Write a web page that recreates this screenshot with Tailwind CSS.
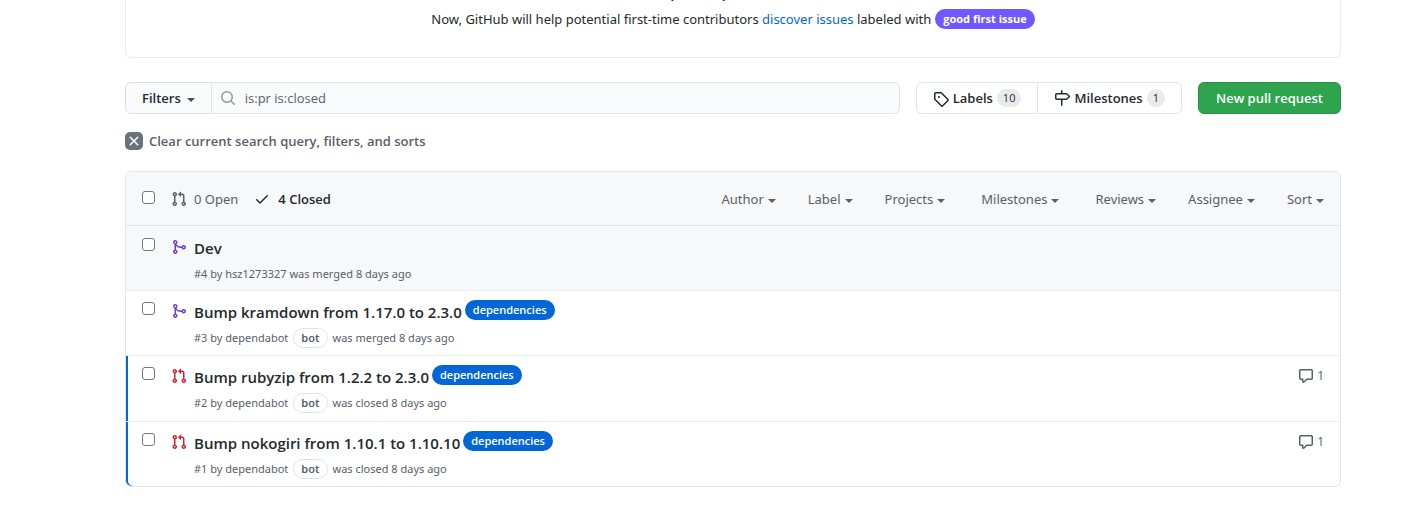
<!DOCTYPE html>
<html lang="en">
<head>
<meta charset="utf-8">
<meta name="viewport" content="width=device-width, initial-scale=1">
<title>Pull requests</title>
<script src="https://cdn.jsdelivr.net/npm/@tailwindcss/browser@4"></script>
</head>
<body class="overflow-x-hidden bg-white font-['Open_Sans','Noto_Sans',sans-serif] text-[13px] leading-5 text-[#24292e]">
<svg class="hidden" aria-hidden="true">
  <symbol id="pr" viewBox="0 0 16 16"><path fill-rule="evenodd" d="M7.177 3.073L9.573.677A.25.25 0 0110 .854v4.792a.25.25 0 01-.427.177L7.177 3.427a.25.25 0 010-.354zM3.75 2.5a.75.75 0 100 1.5.75.75 0 000-1.5zm-2.25.75a2.25 2.25 0 113 2.122v5.256a2.251 2.251 0 11-1.5 0V5.372A2.25 2.25 0 011.5 3.25zM11 2.5h-1V4h1a1 1 0 011 1v5.628a2.251 2.251 0 101.5 0V5A2.5 2.5 0 0011 2.5zm1 10.25a.75.75 0 111.5 0 .75.75 0 01-1.5 0zM3.75 12a.75.75 0 100 1.5.75.75 0 000-1.5z"/></symbol>
  <symbol id="merge" viewBox="0 0 16 16"><path fill-rule="evenodd" d="M5 3.254V3.25v.005a.75.75 0 110-.005v.004zm.45 1.9a2.25 2.25 0 10-1.95.218v5.256a2.25 2.25 0 101.5 0V7.123A5.735 5.735 0 009.25 9h1.378a2.251 2.251 0 100-1.5H9.25a4.25 4.25 0 01-3.8-2.346zM12.75 9a.75.75 0 100-1.5.75.75 0 000 1.5zm-8.5 4.5a.75.75 0 100-1.5.75.75 0 000 1.5z"/></symbol>
  <symbol id="comment" viewBox="0 0 16 16"><path fill-rule="evenodd" d="M2.75 2.5a.25.25 0 00-.25.25v7.5c0 .138.112.25.25.25h2a.75.75 0 01.75.75v2.19l2.72-2.72a.75.75 0 01.53-.22h4.5a.25.25 0 00.25-.25v-7.5a.25.25 0 00-.25-.25H2.75zM1 2.75C1 1.784 1.784 1 2.75 1h10.5c.966 0 1.75.784 1.75 1.75v7.5A1.75 1.75 0 0113.25 12H9.06l-2.573 2.573A1.457 1.457 0 014 13.543V12H2.75A1.75 1.75 0 011 10.25v-7.5z"/></symbol>
</svg>
<main class="pr-[65px] pl-[125px]">
  <section class="-mt-5 rounded-md border border-t-0 border-[#eaecef] pb-7 text-center">
    <h2 class="text-[15px] leading-6 font-semibold">Label issues and pull requests for new contributors</h2>
    <p class="flex items-center justify-center gap-1 pt-[5px]">
      <span class="font-['Noto_Sans',sans-serif]">Now, GitHub will help potential first-time contributors <a href="#" class="text-[#0366d6]">discover issues</a> labeled with</span>
      <a href="#" class="rounded-full bg-[#7057ff] px-2 text-[11px] leading-5 font-bold text-white">good first issue</a>
    </p>
  </section>

  <div class="mt-6 flex h-8">
    <button type="button" class="flex items-center gap-[6px] rounded-l-md border border-[#dddfe1] bg-[#fafbfc] px-4 font-semibold">Filters
      <span class="mt-1 border-x-4 border-t-4 border-x-transparent border-t-[#4a4f54]"></span></button>
    <label class="-ml-px flex flex-1 items-center gap-[9px] rounded-r-md border border-[#e1e4e8] bg-[#fafbfc] pl-2 text-[#586069]">
      <svg class="size-4 fill-[#959da5]" viewBox="0 0 16 16"><path fill-rule="evenodd" d="M11.5 7a4.499 4.499 0 11-8.998 0A4.499 4.499 0 0111.5 7zm-.82 4.74a6 6 0 111.06-1.06l3.04 3.04a.75.75 0 11-1.06 1.06l-3.04-3.04z"/></svg>
      <input type="text" aria-label="Search all issues" value="is:pr is:closed" class="min-w-0 flex-1 bg-transparent outline-none">
    </label>
    <nav class="ml-4 flex font-semibold">
      <a href="#" class="flex items-center gap-1 rounded-l-md border border-[#e1e4e8] px-4">
        <svg class="mt-px size-4 fill-current" viewBox="0 0 16 16"><path fill-rule="evenodd" d="M2.5 7.775V2.75a.25.25 0 01.25-.25h5.025a.25.25 0 01.177.073l6.25 6.25a.25.25 0 010 .354l-5.025 5.025a.25.25 0 01-.354 0l-6.25-6.25a.25.25 0 01-.073-.177zm-1.5 0V2.75C1 1.784 1.784 1 2.75 1h5.025c.464 0 .91.184 1.238.513l6.25 6.25a1.75 1.75 0 010 2.474l-5.026 5.026a1.75 1.75 0 01-2.474 0l-6.25-6.25A1.75 1.75 0 011 7.775zM6 5a1 1 0 100 2 1 1 0 000-2z"/></svg>
        Labels <span class="rounded-full bg-[#e8eaec] px-[6px] text-[11px] leading-[18px] font-medium">10</span></a>
      <a href="#" class="-ml-px flex items-center gap-1 rounded-r-md border border-[#e1e4e8] px-4">
        <svg class="size-4 fill-current" viewBox="0 0 16 16"><path fill-rule="evenodd" d="M7.75 0a.75.75 0 01.75.75V3h3.634c.414 0 .814.147 1.13.414l2.07 1.75a1.75 1.75 0 010 2.672l-2.07 1.75a1.75 1.75 0 01-1.13.414H8.5v5.25a.75.75 0 11-1.5 0V10H2.75A1.75 1.75 0 011 8.25v-3.5C1 3.784 1.784 3 2.75 3H7V.75A.75.75 0 017.75 0zm0 8.5h4.384a.25.25 0 00.161-.06l2.07-1.75a.25.25 0 000-.38l-2.07-1.75a.25.25 0 00-.161-.06H2.75a.25.25 0 00-.25.25v3.5c0 .138.112.25.25.25h5z"/></svg>
        Milestones <span class="rounded-full bg-[#e8eaec] px-[6px] text-[11px] leading-[18px] font-medium">1</span></a>
    </nav>
    <a href="#" class="ml-4 flex items-center rounded-md border border-[#2a9147] bg-[#2ea44f] px-[17px] font-semibold text-white">New pull request</a>
  </div>

  <a href="#" class="mt-[17px] flex w-fit items-center gap-[6px] font-semibold text-[#586069]">
    <span class="flex size-[18px] items-center justify-center rounded-[5px] bg-[#6a737d]"><svg class="size-4 fill-white" viewBox="0 0 16 16"><path fill-rule="evenodd" d="M3.72 3.72a.75.75 0 011.06 0L8 6.94l3.22-3.22a.75.75 0 111.06 1.06L9.06 8l3.22 3.22a.75.75 0 11-1.06 1.06L8 9.06l-3.22 3.22a.75.75 0 01-1.06-1.06L6.94 8 3.72 4.78a.75.75 0 010-1.06z"/></svg></span>
    Clear current search query, filters, and sorts</a>

  <section class="mt-5 overflow-hidden rounded-md border border-[#e1e4e8]">
    <header class="flex h-[53px] items-center bg-[#f6f8fa] px-4 text-[#586069]">
      <input type="checkbox" aria-label="Select all" class="mb-[2px] size-[13px] appearance-none rounded-[3px] border border-[#767676] bg-white">
      <a href="#" class="ml-4 flex items-center gap-[7px] font-['Noto_Sans',sans-serif]"><svg class="size-4 fill-current"><use href="#pr"/></svg>0 Open</a>
      <a href="#" class="ml-4 flex items-center gap-2 font-semibold text-[#24292e]"><svg class="size-4 fill-current" viewBox="0 0 16 16"><path fill-rule="evenodd" d="M13.78 4.22a.75.75 0 010 1.06l-7.25 7.25a.75.75 0 01-1.06 0L2.22 9.28a.75.75 0 011.06-1.06L6 10.94l6.72-6.72a.75.75 0 011.06 0z"/></svg>4 Closed</a>
      <div class="ml-auto flex gap-8 font-['Noto_Sans',sans-serif]">
        <button type="button" class="flex items-center gap-1">Author<span class="mt-1 border-x-4 border-t-4 border-x-transparent border-t-current"></span></button>
        <button type="button" class="flex items-center gap-1">Label<span class="mt-1 border-x-4 border-t-4 border-x-transparent border-t-current"></span></button>
        <button type="button" class="mr-1 flex items-center gap-1">Projects<span class="mt-1 border-x-4 border-t-4 border-x-transparent border-t-current"></span></button>
        <button type="button" class="mr-1 flex items-center gap-1">Milestones<span class="mt-1 border-x-4 border-t-4 border-x-transparent border-t-current"></span></button>
        <button type="button" class="flex items-center gap-1">Reviews<span class="mt-1 border-x-4 border-t-4 border-x-transparent border-t-current"></span></button>
        <button type="button" class="flex items-center gap-1">Assignee<span class="mt-1 border-x-4 border-t-4 border-x-transparent border-t-current"></span></button>
        <button type="button" class="flex items-center gap-1">Sort<span class="mt-1 border-x-4 border-t-4 border-x-transparent border-t-current"></span></button>
      </div>
    </header>
    <ul class="text-[11px] text-[#586069]">
      <li class="flex items-start border-t border-[#e1e4e8] bg-[#f6f8fa] px-4 pt-3 pb-[6px]">
        <input type="checkbox" aria-label="Select Dev" class="size-[13px] appearance-none rounded-[3px] border border-[#767676] bg-white">
        <svg class="mt-px ml-4 size-4 fill-[#6f42c1]"><use href="#merge"/></svg>
        <div class="ml-[7px]">
          <h3 class="flex h-5 items-center"><a href="#" class="text-[15px] font-semibold text-[#24292e]">Dev</a></h3>
          <p class="mt-[6px] font-['Noto_Sans',sans-serif]">#4 by <a href="#">hsz1273327</a> was merged 8 days ago</p>
        </div>
      </li>
      <li class="flex items-start border-t border-[#eaecef] px-4 pt-[11px] pb-[7px]">
        <input type="checkbox" aria-label="Select Bump kramdown" class="size-[13px] appearance-none rounded-[3px] border border-[#767676] bg-white">
        <svg class="mt-px ml-4 size-4 fill-[#6f42c1]"><use href="#merge"/></svg>
        <div class="ml-[7px]">
          <h3 class="flex h-5 items-center gap-[3px]"><a href="#" class="text-[15px] font-semibold text-[#24292e]">Bump kramdown from 1.17.0 to 2.3.0</a><a href="#" class="mb-1 rounded-full bg-[#0366d6] px-2 leading-5 font-semibold text-white">dependencies</a></h3>
          <p class="mt-[6px] flex items-center gap-[5px] font-['Noto_Sans',sans-serif]"><span>#3 by <a href="#">dependabot</a></span><span class="rounded-full border border-[#e1e4e8] px-[7px] leading-[18px] font-semibold">bot</span>was merged 8 days ago</p>
        </div>
      </li>
      <li class="flex items-start border-t border-[#eaecef] px-4 pt-[11px] pb-2 shadow-[inset_2px_0_0_#0366d6]">
        <input type="checkbox" aria-label="Select Bump rubyzip" class="size-[13px] appearance-none rounded-[3px] border border-[#767676] bg-white">
        <svg class="mt-px ml-4 size-4 fill-[#cb2431]"><use href="#pr"/></svg>
        <div class="ml-[7px]">
          <h3 class="flex h-5 items-center gap-[3px]"><a href="#" class="text-[15px] font-semibold text-[#24292e]">Bump rubyzip from 1.2.2 to 2.3.0</a><a href="#" class="mb-1 rounded-full bg-[#0366d6] px-2 leading-5 font-semibold text-white">dependencies</a></h3>
          <p class="mt-[6px] flex items-center gap-[5px] font-['Noto_Sans',sans-serif]"><span>#2 by <a href="#">dependabot</a></span><span class="rounded-full border border-[#e1e4e8] px-[7px] leading-[18px] font-semibold">bot</span>was closed 8 days ago</p>
        </div>
        <a href="#" class="ml-auto flex items-center gap-[3px] text-xs leading-[18px]" aria-label="1 comment"><svg class="size-4 fill-current"><use href="#comment"/></svg>1</a>
      </li>
      <li class="flex items-start rounded-bl-[5px] border-t border-[#eaecef] px-4 pt-[11px] pb-[7px] shadow-[inset_2px_0_0_#0366d6]">
        <input type="checkbox" aria-label="Select Bump nokogiri" class="size-[13px] appearance-none rounded-[3px] border border-[#767676] bg-white">
        <svg class="mt-px ml-4 size-4 fill-[#cb2431]"><use href="#pr"/></svg>
        <div class="ml-[7px]">
          <h3 class="flex h-5 items-center gap-[3px]"><a href="#" class="text-[15px] font-semibold text-[#24292e]">Bump nokogiri from 1.10.1 to 1.10.10</a><a href="#" class="mb-1 rounded-full bg-[#0366d6] px-2 leading-5 font-semibold text-white">dependencies</a></h3>
          <p class="mt-[6px] flex items-center gap-[5px] font-['Noto_Sans',sans-serif]"><span>#1 by <a href="#">dependabot</a></span><span class="rounded-full border border-[#e1e4e8] px-[7px] leading-[18px] font-semibold">bot</span>was closed 8 days ago</p>
        </div>
        <a href="#" class="ml-auto flex items-center gap-[3px] text-xs leading-[18px]" aria-label="1 comment"><svg class="size-4 fill-current"><use href="#comment"/></svg>1</a>
      </li>
    </ul>
  </section>
</main>
</body>
</html>
